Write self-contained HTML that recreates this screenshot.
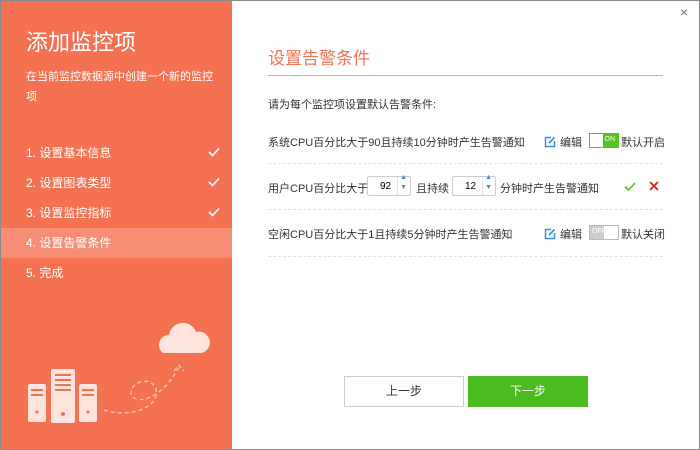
<html><head><style>
body{margin:0;width:700px;height:450px;overflow:hidden;font-family:"Liberation Sans","Noto Sans CJK SC",sans-serif;background:#fff;position:relative}
.b{position:absolute;inset:0;border:1px solid #8a8a8a;box-sizing:border-box}
.l{position:absolute;left:1px;top:1px;width:231px;height:448px;background:#f47152;color:#fff}
.t{position:absolute;white-space:nowrap}
.s{position:absolute;left:0;width:231px;height:30px;line-height:30px;font-size:12px;padding-left:25px;box-sizing:border-box}
.ck{position:absolute;right:12px;top:9px}
.r{font-size:11px;color:#333}
.dash{position:absolute;left:268px;width:395px;border-top:1px dashed #e2e2e2}
.ed{color:#333;font-size:11px}
.ed svg{vertical-align:-2px;margin-right:4px}
.sp{position:absolute;height:20px;width:44px;border:1px solid #ccc;border-radius:2px;background:#fff;font-size:10px;line-height:19px;box-sizing:border-box}
.sw{position:absolute;width:30px;height:15px;box-sizing:border-box;font-size:7px;color:#fff}
</style></head><body>
<div class="l">
<div class="t" style="left:25px;top:24px;font-size:22px">添加监控项</div>
<div class="t" style="left:25px;top:66px;font-size:11px;line-height:20px">在当前监控数据源中创建一个新的监控<br>项</div>
<div class="s" style="top:137px">1. 设置基本信息<svg class="ck" width="12" height="10"><path d="M1 5 L4.5 8.5 L11 1.5" fill="none" stroke="#fff" stroke-width="1.6"/></svg></div>
<div class="s" style="top:167px">2. 设置图表类型<svg class="ck" width="12" height="10"><path d="M1 5 L4.5 8.5 L11 1.5" fill="none" stroke="#fff" stroke-width="1.6"/></svg></div>
<div class="s" style="top:197px">3. 设置监控指标<svg class="ck" width="12" height="10"><path d="M1 5 L4.5 8.5 L11 1.5" fill="none" stroke="#fff" stroke-width="1.6"/></svg></div>
<div class="s" style="top:227px;background:#f68d74">4. 设置告警条件</div>
<div class="s" style="top:257px">5. 完成</div>
<svg style="position:absolute;left:0;top:300px" width="231" height="148">
<g fill="#fde4dc">
<rect x="27" y="83" width="18" height="38" rx="2"/><rect x="50" y="68" width="24" height="54" rx="2"/><rect x="78" y="83" width="18" height="38" rx="2"/>
<path d="M162 52 a10 10 0 0 1 6-18 a14 14 0 0 1 27-3 a10 10 0 0 1 6 21 z"/>
</g>
<g fill="#f47152"><rect x="30" y="88" width="12" height="2"/><rect x="30" y="93" width="12" height="2"/><rect x="54" y="73" width="16" height="2"/><rect x="54" y="78" width="16" height="2"/><rect x="54" y="83" width="16" height="2"/><rect x="54" y="88" width="16" height="2"/><rect x="81" y="88" width="12" height="2"/><rect x="81" y="93" width="12" height="2"/><circle cx="36" cy="111" r="1.5"/><circle cx="62" cy="113" r="2"/><circle cx="87" cy="111" r="1.5"/></g>
<path d="M103 109 C130 118 160 105 155 88 C150 75 130 80 130 92 C132 105 160 100 178 66 M173 70 L178 64 L183 70" fill="none" stroke="#fbc7b8" stroke-width="1.3" stroke-dasharray="4 3"/>
</svg>
</div>
<div class="t" style="left:680px;top:4px;font-size:14px;color:#777">×</div>
<div class="t" style="left:268px;top:44px;font-size:17px;color:#f47152">设置告警条件</div>
<div style="position:absolute;left:268px;top:75px;width:395px;border-top:1px solid #f5a08a"></div>
<div class="t r" style="left:268px;top:96px">请为每个监控项设置默认告警条件:</div>
<div class="t r" style="left:268px;top:134px">系统CPU百分比大于90且持续10分钟时产生告警通知</div>
<div class="t ed" style="left:544px;top:134px"><svg width="12" height="12"><path d="M7 1.5 H1.5 V10.5 H10.5 V5" fill="none" stroke="#3b8fe0" stroke-width="1.5"/><path d="M5 7 L10.5 1.5" stroke="#3b8fe0" stroke-width="1.8"/></svg>编辑</div>
<div class="sw" style="left:589px;top:133px;border:1px solid #52c41a;background:#52c41a"><div style="position:absolute;left:0;top:0;width:13px;height:13px;background:#fff"></div><span style="position:absolute;right:3px;top:2px">ON</span></div>
<div class="t r" style="left:621px;top:134px">默认开启</div>
<div class="dash" style="top:163px"></div>
<div class="t r" style="left:268px;top:180px">用户CPU百分比大于</div>
<div class="sp" style="left:367px;top:176px"><span style="margin-left:12px">92</span><span style="position:absolute;left:29px;top:0;width:1px;height:18px;background:#e4e4e4"></span><span style="position:absolute;right:3px;top:-4px;color:#3b8fe0;font-size:7px;line-height:10px">▲<br>▼</span></div>
<div class="t r" style="left:416px;top:180px">且持续</div>
<div class="sp" style="left:452px;top:176px"><span style="margin-left:12px">12</span><span style="position:absolute;left:29px;top:0;width:1px;height:18px;background:#e4e4e4"></span><span style="position:absolute;right:3px;top:-4px;color:#3b8fe0;font-size:7px;line-height:10px">▲<br>▼</span></div>
<div class="t r" style="left:500px;top:180px">分钟时产生告警通知</div>
<svg style="position:absolute;left:624px;top:182px" width="12" height="9"><path d="M1 4.5 L4.5 8 L11 1" fill="none" stroke="#52c41a" stroke-width="1.6"/></svg>
<svg style="position:absolute;left:649px;top:181px" width="10" height="10"><path d="M1 1 L9 9 M9 1 L1 9" stroke="#e0201b" stroke-width="1.8"/></svg>
<div class="dash" style="top:209px"></div>
<div class="t r" style="left:268px;top:226px">空闲CPU百分比大于1且持续5分钟时产生告警通知</div>
<div class="t ed" style="left:544px;top:226px"><svg width="12" height="12"><path d="M7 1.5 H1.5 V10.5 H10.5 V5" fill="none" stroke="#3b8fe0" stroke-width="1.5"/><path d="M5 7 L10.5 1.5" stroke="#3b8fe0" stroke-width="1.8"/></svg>编辑</div>
<div class="sw" style="left:589px;top:225px;border:1px solid #bbb;background:#ccc"><div style="position:absolute;right:0;top:0;width:14px;height:13px;background:#fff"></div><span style="position:absolute;left:2px;top:2px">OFF</span></div>
<div class="t r" style="left:621px;top:226px">默认关闭</div>
<div class="dash" style="top:256px"></div>
<div style="position:absolute;left:344px;top:376px;width:120px;height:31px;border:1px solid #ccc;box-sizing:border-box;text-align:center;line-height:29px;font-size:12px;color:#333">上一步</div>
<div style="position:absolute;left:468px;top:376px;width:120px;height:31px;background:#4cbb1f;text-align:center;line-height:31px;font-size:12px;color:#fff">下一步</div>
<div class="b"></div>
</body></html>
